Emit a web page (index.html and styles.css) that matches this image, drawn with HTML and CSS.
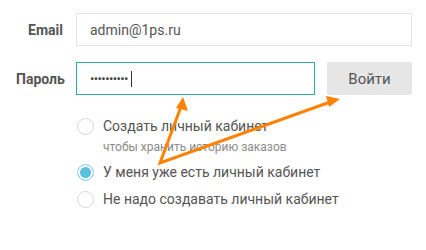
FILE: index.html
```html
<!DOCTYPE html>
<html lang="ru">
<head>
    <meta charset="UTF-8">
    <meta name="viewport" content="width=device-width, initial-scale=1.0">
    <title>Вход</title>
    <link rel="stylesheet" href="styles.css">
</head>
<body>
<div class="container">
<div class="form">
<div class="field">
<div class="label">Email</div>
<div class="input">admin@1ps.ru</div>
</div>
<div class="field">
<div class="label">Пароль</div>
<div class="input input-active"><span class="dots">••••••••••</span><span class="caret"></span></div>
<div class="btn">Войти</div>
</div>
<div class="options">
<div class="option">
<span class="radio"></span>
<div>
<div class="option-text">Создать личный кабинет</div>
<div class="option-hint">чтобы хранить историю заказов</div>
</div>
</div>
<div class="option">
<span class="radio radio-checked"></span>
<div class="option-text">У меня уже есть личный кабинет</div>
</div>
<div class="option">
<span class="radio"></span>
<div class="option-text">Не надо создавать личный кабинет</div>
</div>
</div>
</div>

<svg class="arrows" width="426" height="250" viewBox="0 0 426 250">
<polyline points="182,104 160,163 333,101" fill="none" stroke="#ff8200" stroke-width="3" stroke-linejoin="miter"/>
<polygon points="183,97 188,111 176,108" fill="#ff8200"/>
<polygon points="340,99 326,96 329,107" fill="#ff8200"/>
</svg>
</div>
</body>
</html>
```

FILE: styles.css
```css
* {
margin: 0;
padding: 0;
box-sizing: border-box;
}

body {
background-color: #ffffff;
font-family: Roboto, "Liberation Sans", sans-serif;
color: #555555;
}

.container {
position: relative;
width: 426px;
height: 250px;
}

.form {
padding: 13px 14px 0 16px;
}

.field {
display: flex;
align-items: center;
margin-bottom: 16px;
}

.label {
width: 47px;
margin-right: 13px;
text-align: right;
font-size: 14px;
font-weight: bold;
color: #555555;
}

.input {
display: flex;
align-items: center;
width: 336px;
height: 33px;
padding-left: 13px;
border: 1px solid #e3e3e3;
font-size: 14px;
color: #555555;
}

.input-active {
width: 239px;
border-color: #2bb58e;
}

.dots {
font-size: 13px;
letter-spacing: -0.6px;
color: #444444;
}

.caret {
display: inline-block;
width: 1px;
height: 16px;
margin-left: 3px;
background-color: #333333;
}

.btn {
display: flex;
justify-content: center;
align-items: center;
width: 85px;
height: 33px;
margin-left: 12px;
background-color: #e6e6e6;
border-radius: 2px;
font-size: 15px;
color: #555555;
}

.options {
padding-left: 61px;
padding-top: 7px;
}

.option {
display: flex;
align-items: flex-start;
margin-bottom: 10px;
}

.radio {
width: 17px;
height: 17px;
margin-right: 9px;
border: 1px solid #d6d6d6;
border-radius: 50%;
flex-shrink: 0;
}

.radio-checked {
border-color: #9fd5ea;
background-color: #5bbfe0;
box-shadow: inset 0 0 0 2px #ffffff;
}

.option-text {
font-size: 14px;
line-height: 17px;
}

.option-hint {
font-size: 12px;
line-height: 14px;
margin-top: 5px;
color: #8a8a8a;
}

.arrows {
position: absolute;
left: 0;
top: 0;
}
```
